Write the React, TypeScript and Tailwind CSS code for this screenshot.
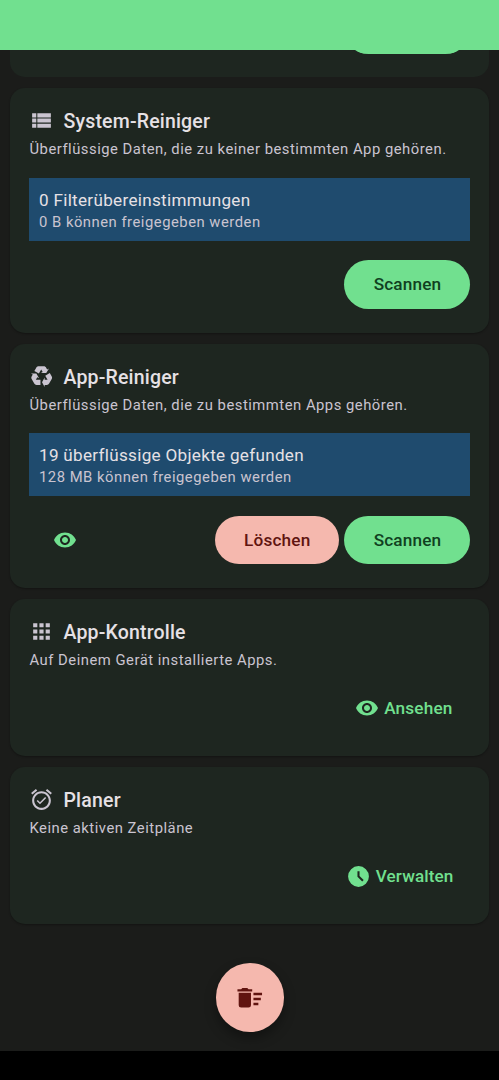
import type { ReactNode } from 'react';

const ICONS = {
  list: 'M3 14h4v-4H3v4zm0 5h4v-4H3v4zM3 9h4V5H3v4zm5 5h13v-4H8v4zm0 5h13v-4H8v4zM8 5v4h13V5H8z',
  recycle:
    'M21.82,15.42L19.32,19.75C18.83,20.61 17.92,21.06 17,21H15V23L12.5,18.5L15,14V16H17.82L15.6,12.15L19.93,9.65L21.73,12.77C22.25,13.54 22.32,14.57 21.82,15.42M9.21,3.06H14.21C15.19,3.06 16.04,3.63 16.45,4.45L17.45,6.19L19.18,5.19L16.54,9.6L11.39,9.69L13.12,8.69L11.71,6.24L9.5,10.09L5.16,7.59L6.96,4.47C7.37,3.64 8.22,3.06 9.21,3.06M5.05,19.76L2.55,15.43C2.06,14.58 2.13,13.56 2.64,12.79L3.64,11.06L1.91,10.06L7.05,10.14L9.7,14.56L7.97,13.56L6.56,16H11V21H7.4C6.47,21.07 5.55,20.61 5.05,19.76Z',
  apps: 'M4 8h4V4H4v4zm6 12h4v-4h-4v4zm-6 0h4v-4H4v4zm0-6h4v-4H4v4zm6 0h4v-4h-4v4zm6-10v4h4V4h-4zm-6 4h4V4h-4v4zm6 6h4v-4h-4v4zm0 6h4v-4h-4v4z',
  alarm:
    'M22 5.72l-4.6-3.86-1.29 1.53 4.6 3.86L22 5.72zM7.88 3.39L6.6 1.86 2 5.71l1.29 1.53 4.59-3.85zM12 4c-4.97 0-9 4.03-9 9s4.02 9 9 9c4.97 0 9-4.03 9-9s-4.03-9-9-9zm0 16c-3.87 0-7-3.13-7-7s3.13-7 7-7 7 3.13 7 7-3.13 7-7 7zm-1.46-5.47L8.41 12.4l-1.06 1.06 3.18 3.18 6-6-1.06-1.06-4.93 4.95z',
  eye: 'M12 4.5C7 4.5 2.73 7.61 1 12c1.73 4.39 6 7.5 11 7.5s9.27-3.11 11-7.5c-1.73-4.39-6-7.5-11-7.5zM12 17c-2.76 0-5-2.24-5-5s2.24-5 5-5 5 2.24 5 5-2.24 5-5 5zm0-8c-1.66 0-3 1.34-3 3s1.34 3 3 3 3-1.34 3-3-1.34-3-3-3z',
  clock: 'M12,2A10,10 0 0,0 2,12A10,10 0 0,0 12,22A10,10 0 0,0 22,12A10,10 0 0,0 12,2M15.55,16.7L11,12.3V7H13V11.5L17,15.3Z',
  sweep:
    'M15,16H19V18H15V16M15,8H22V10H15V8M15,12H21V14H15V12M3,18A2,2 0 0,0 5,20H11A2,2 0 0,0 13,18V8H3V18M14,5H11L10,4H6L5,5H2V7H14V5Z',
};

function Icon({ name, className }: { name: keyof typeof ICONS; className: string }) {
  return (
    <svg viewBox="0 0 24 24" fill="currentColor" className={`shrink-0 ${className}`}>
      <path d={ICONS[name]} />
    </svg>
  );
}

interface CardProps {
  icon: keyof typeof ICONS;
  title: string;
  text: string;
  className: string;
  children: ReactNode;
}

function Card({ icon, title, text, className, children }: CardProps) {
  return (
    <section className={`flex shrink-0 flex-col rounded-[15px] bg-[#1e2620] px-[19.5px] pt-[19.4px] shadow-[0_1px_2px_rgba(0,0,0,0.3)] ${className}`}>
      <div className="flex h-[26px] items-center">
        <Icon name={icon} className="-ml-px size-[25px] text-[#cac4d0]" />
        <h2 className="ml-[10px] pt-[4px] text-[19.5px] leading-[26px] font-medium tracking-[0.18px] text-[#e6e1e5]">{title}</h2>
      </div>
      <p className="mt-[5.85px] text-[14.8px] leading-5 tracking-[0.51px] whitespace-nowrap text-[#cac4d0]">{text}</p>
      {children}
    </section>
  );
}

function InfoBox({ title, text }: { title: string; text: string }) {
  return (
    <div className="-ml-[0.5px] mt-[18.5px] h-[63px] bg-[#1f4b6e] px-[10px] pt-[11px]">
      <p className="text-[17.1px] leading-[23px] tracking-[0.3px] text-[#e6e1e5]">{title}</p>
      <p className="text-[14.8px] leading-5 tracking-[0.51px] text-[#cac4d0]">{text}</p>
    </div>
  );
}

function ScanButton() {
  return (
    <button className="h-[48.5px] w-[125.5px] rounded-full bg-[#71e08f] pt-[1.5px] pl-[1.5px] text-[17.2px] font-medium tracking-[0.16px] text-[#10401f]">
      Scannen
    </button>
  );
}

export default function App() {
  return (
    <div className="relative flex h-[1080px] w-[499px] flex-col overflow-hidden bg-[#1b1c1a] font-[Roboto,sans-serif]">
      <header className="h-[50px] shrink-0 bg-[#71e08f]" />

      <main className="flex h-[1001px] shrink-0 flex-col gap-[11px] px-[10px]">
        {/* tail of the card that is scrolled under the status bar */}
        <section className="flex h-[27px] shrink-0 justify-end overflow-hidden rounded-b-[15px] bg-[#1e2620] pr-[19px]">
          <div className="-mt-[45px] h-[49px] w-[126px] rounded-full bg-[#71e08f]" />
        </section>

        <Card icon="list" title="System-Reiniger" text="Überflüssige Daten, die zu keiner bestimmten App gehören." className="h-[244.5px]">
          <InfoBox title="0 Filterübereinstimmungen" text="0 B können freigegeben werden" />
          <div className="mt-[19.6px] flex justify-end">
            <ScanButton />
          </div>
        </Card>

        <Card icon="recycle" title="App-Reiniger" text="Überflüssige Daten, die zu bestimmten Apps gehören." className="h-[244.5px]">
          <InfoBox title="19 überflüssige Objekte gefunden" text="128 MB können freigegeben werden" />
          <div className="mt-[19.6px] flex items-center gap-[5px]">
            <button className="mr-auto ml-[23.5px] text-[#71e08f]">
              <Icon name="eye" className="size-6" />
            </button>
            <button className="h-[48.5px] w-[124.5px] rounded-full bg-[#f5b8ae] pt-[1.5px] pl-px text-[17.2px] font-medium tracking-[0.16px] text-[#601410]">
              Löschen
            </button>
            <ScanButton />
          </div>
        </Card>

        <Card icon="apps" title="App-Kontrolle" text="Auf Deinem Gerät installierte Apps." className="h-[157px]">
          <button className="mt-[24.75px] mr-[17px] flex items-center gap-[5px] self-end text-[17.2px] font-medium tracking-[0.16px] text-[#71e08f]">
            <Icon name="eye" className="size-6" />
            <span className="pt-px">Ansehen</span>
          </button>
        </Card>

        <Card icon="alarm" title="Planer" text="Keine aktiven Zeitpläne" className="h-[157px]">
          <button className="mt-[24.75px] mr-[16px] flex items-center gap-[5px] self-end text-[17.1px] font-medium tracking-[0.12px] text-[#71e08f]">
            <Icon name="clock" className="size-[25px]" />
            <span className="pt-px">Verwalten</span>
          </button>
        </Card>
      </main>

      <footer className="h-[29px] shrink-0 bg-black" />

      {/* floating action button */}
      <button className="absolute top-[963px] left-[215.5px] flex size-[68.5px] items-center justify-center rounded-full bg-[#f5b8ae] text-[#601410] shadow-[0_6px_12px_rgba(0,0,0,0.35)]">
        <Icon name="sweep" className="size-[29.5px]" />
      </button>
    </div>
  );
}
